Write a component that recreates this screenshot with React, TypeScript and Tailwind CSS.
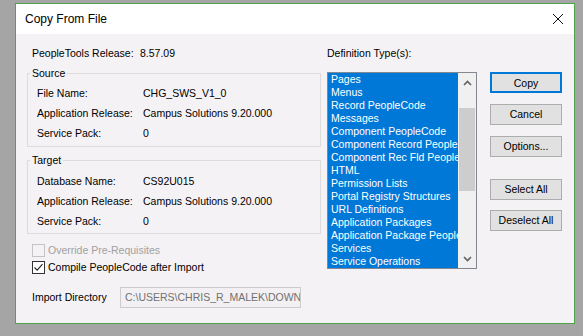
import React from 'react';

const defTypes = [
  'Pages',
  'Menus',
  'Record PeopleCode',
  'Messages',
  'Component PeopleCode',
  'Component Record PeopleCode',
  'Component Rec Fld PeopleCode',
  'HTML',
  'Permission Lists',
  'Portal Registry Structures',
  'URL Definitions',
  'Application Packages',
  'Application Package PeopleCode',
  'Services',
  'Service Operations',
];

const sourceRows = [
  { label: 'File Name:', value: 'CHG_SWS_V1_0' },
  { label: 'Application Release:', value: 'Campus Solutions 9.20.000' },
  { label: 'Service Pack:', value: '0' },
];

const targetRows = [
  { label: 'Database Name:', value: 'CS92U015' },
  { label: 'Application Release:', value: 'Campus Solutions 9.20.000' },
  { label: 'Service Pack:', value: '0' },
];

const InfoRow = ({ label, value }: { label: string; value: string }) => (
  <div className="flex h-[20px] items-center pl-[7px]">
    <span className="w-[106px]">{label}</span>
    <span>{value}</span>
  </div>
);

const DlgButton = ({ text, isDefault }: { text: string; isDefault?: boolean }) => (
  <button
    className={`h-[21px] w-[72px] bg-[#e1e1e1] text-center leading-[19px] ${
      isDefault ? 'border-2 border-[#0078d7] leading-[17px]' : 'border border-[#adadad]'
    }`}
  >
    {text}
  </button>
);

const CheckBox = ({ checked, disabled }: { checked?: boolean; disabled?: boolean }) => (
  <span
    className={`flex h-[13px] w-[13px] items-center justify-center border ${
      disabled ? 'border-[#c4c4c4]' : 'border-[#333333] bg-white'
    }`}
  >
    {checked && (
      <svg width="11" height="11" viewBox="0 0 11 11">
        <path d="M1.5 5.5 L4.2 8.2 L9.5 2.2" fill="none" stroke="#222" strokeWidth="1.1" />
      </svg>
    )}
  </span>
);

export default function App() {
  return (
    <div
      className="h-[336px] w-[583px] overflow-hidden bg-[#a5a5a5] pl-[15px] pt-[3px] text-[10.5px] text-black"
      style={{ fontFamily: '"Liberation Sans", Arial, sans-serif' }}
    >
      <div className="flex h-[321px] w-[560px] flex-col border border-[#4fa34a] bg-[#f5f2f5]">
        {/* title bar */}
        <div className="flex h-[30px] shrink-0 items-center justify-between bg-white pl-[9px] pr-[10px] text-[12px]">
          <span>Copy From File</span>
          <svg width="12" height="12" viewBox="0 0 12 12">
            <path d="M1 1 L11 11 M11 1 L1 11" stroke="#111" strokeWidth="1" />
          </svg>
        </div>

        <div className="flex pl-[11px] leading-[13px]">
          {/* left column */}
          <div className="flex w-[294px] flex-col">
            <div className="mt-[13px] flex h-[13px] items-center pl-[5px]">
              <span className="w-[108px]">PeopleTools Release:</span>
              <span>8.57.09</span>
            </div>

            <fieldset className="mt-[7px] h-[80px] border border-[#dcdcdc] pb-[3px] pl-[2px] pt-[3px]">
              <legend className="px-[2px] leading-[13px]">Source</legend>
              {sourceRows.map((r) => (
                <InfoRow key={r.label} label={r.label} value={r.value} />
              ))}
            </fieldset>

            <fieldset className="mt-[7px] h-[80px] border border-[#dcdcdc] pb-[3px] pl-[2px] pt-[4px]">
              <legend className="px-[2px] leading-[13px]">Target</legend>
              {targetRows.map((r) => (
                <InfoRow key={r.label} label={r.label} value={r.value} />
              ))}
            </fieldset>

            <div className="mt-[10px] flex h-[13px] items-center gap-[3px] pl-[5px] text-[#a0a0a0]">
              <CheckBox disabled />
              <span>Override Pre-Requisites</span>
            </div>
            <div className="mt-[4px] flex h-[13px] items-center gap-[3px] pl-[5px]">
              <CheckBox checked />
              <span>Compile PeopleCode after Import</span>
            </div>

            <div className="mt-[13px] flex items-center pl-[5px]">
              <span className="w-[88px]">Import Directory</span>
              <div className="h-[21px] w-[181px] overflow-hidden whitespace-nowrap border border-[#cccccc] bg-[#f3f0f3] pl-[4px] leading-[19px] text-[#707070]">
                C:\USERS\CHRIS_R_MALEK\DOWNLOADS\
              </div>
            </div>
          </div>

          {/* definition types */}
          <div className="ml-[6px] flex w-[150px] flex-col">
            <div className="mt-[13px] h-[13px]">Definition Type(s):</div>
            <div className="mt-[12px] flex h-[197px] border border-[#828790] bg-white">
              <ul className="w-[130px] overflow-hidden bg-[#0078d7] text-white">
                {defTypes.map((t) => (
                  <li key={t} className="h-[13px] whitespace-nowrap pl-[3px] leading-[13px]">
                    {t}
                  </li>
                ))}
              </ul>
              <div className="flex w-[18px] flex-col items-center bg-[#f0f0f0]">
                <svg className="mt-[7px]" width="9" height="6" viewBox="0 0 9 6">
                  <path d="M1 5 L4.5 1.5 L8 5" fill="none" stroke="#606060" strokeWidth="1.6" />
                </svg>
                <div className="mt-[22px] h-[83px] w-[16px] bg-[#cdcdcd]" />
                <div className="flex-1" />
                <svg className="mb-[6px]" width="9" height="6" viewBox="0 0 9 6">
                  <path d="M1 1 L4.5 4.5 L8 1" fill="none" stroke="#606060" strokeWidth="1.6" />
                </svg>
              </div>
            </div>
          </div>

          {/* buttons */}
          <div className="ml-[13px] mt-[38px] flex flex-col">
            <DlgButton text="Copy" isDefault />
            <div className="mt-[11px]">
              <DlgButton text="Cancel" />
            </div>
            <div className="mt-[11px]">
              <DlgButton text="Options..." />
            </div>
            <div className="mt-[22px]">
              <DlgButton text="Select All" />
            </div>
            <div className="mt-[10px]">
              <DlgButton text="Deselect All" />
            </div>
          </div>
        </div>
      </div>
    </div>
  );
}
